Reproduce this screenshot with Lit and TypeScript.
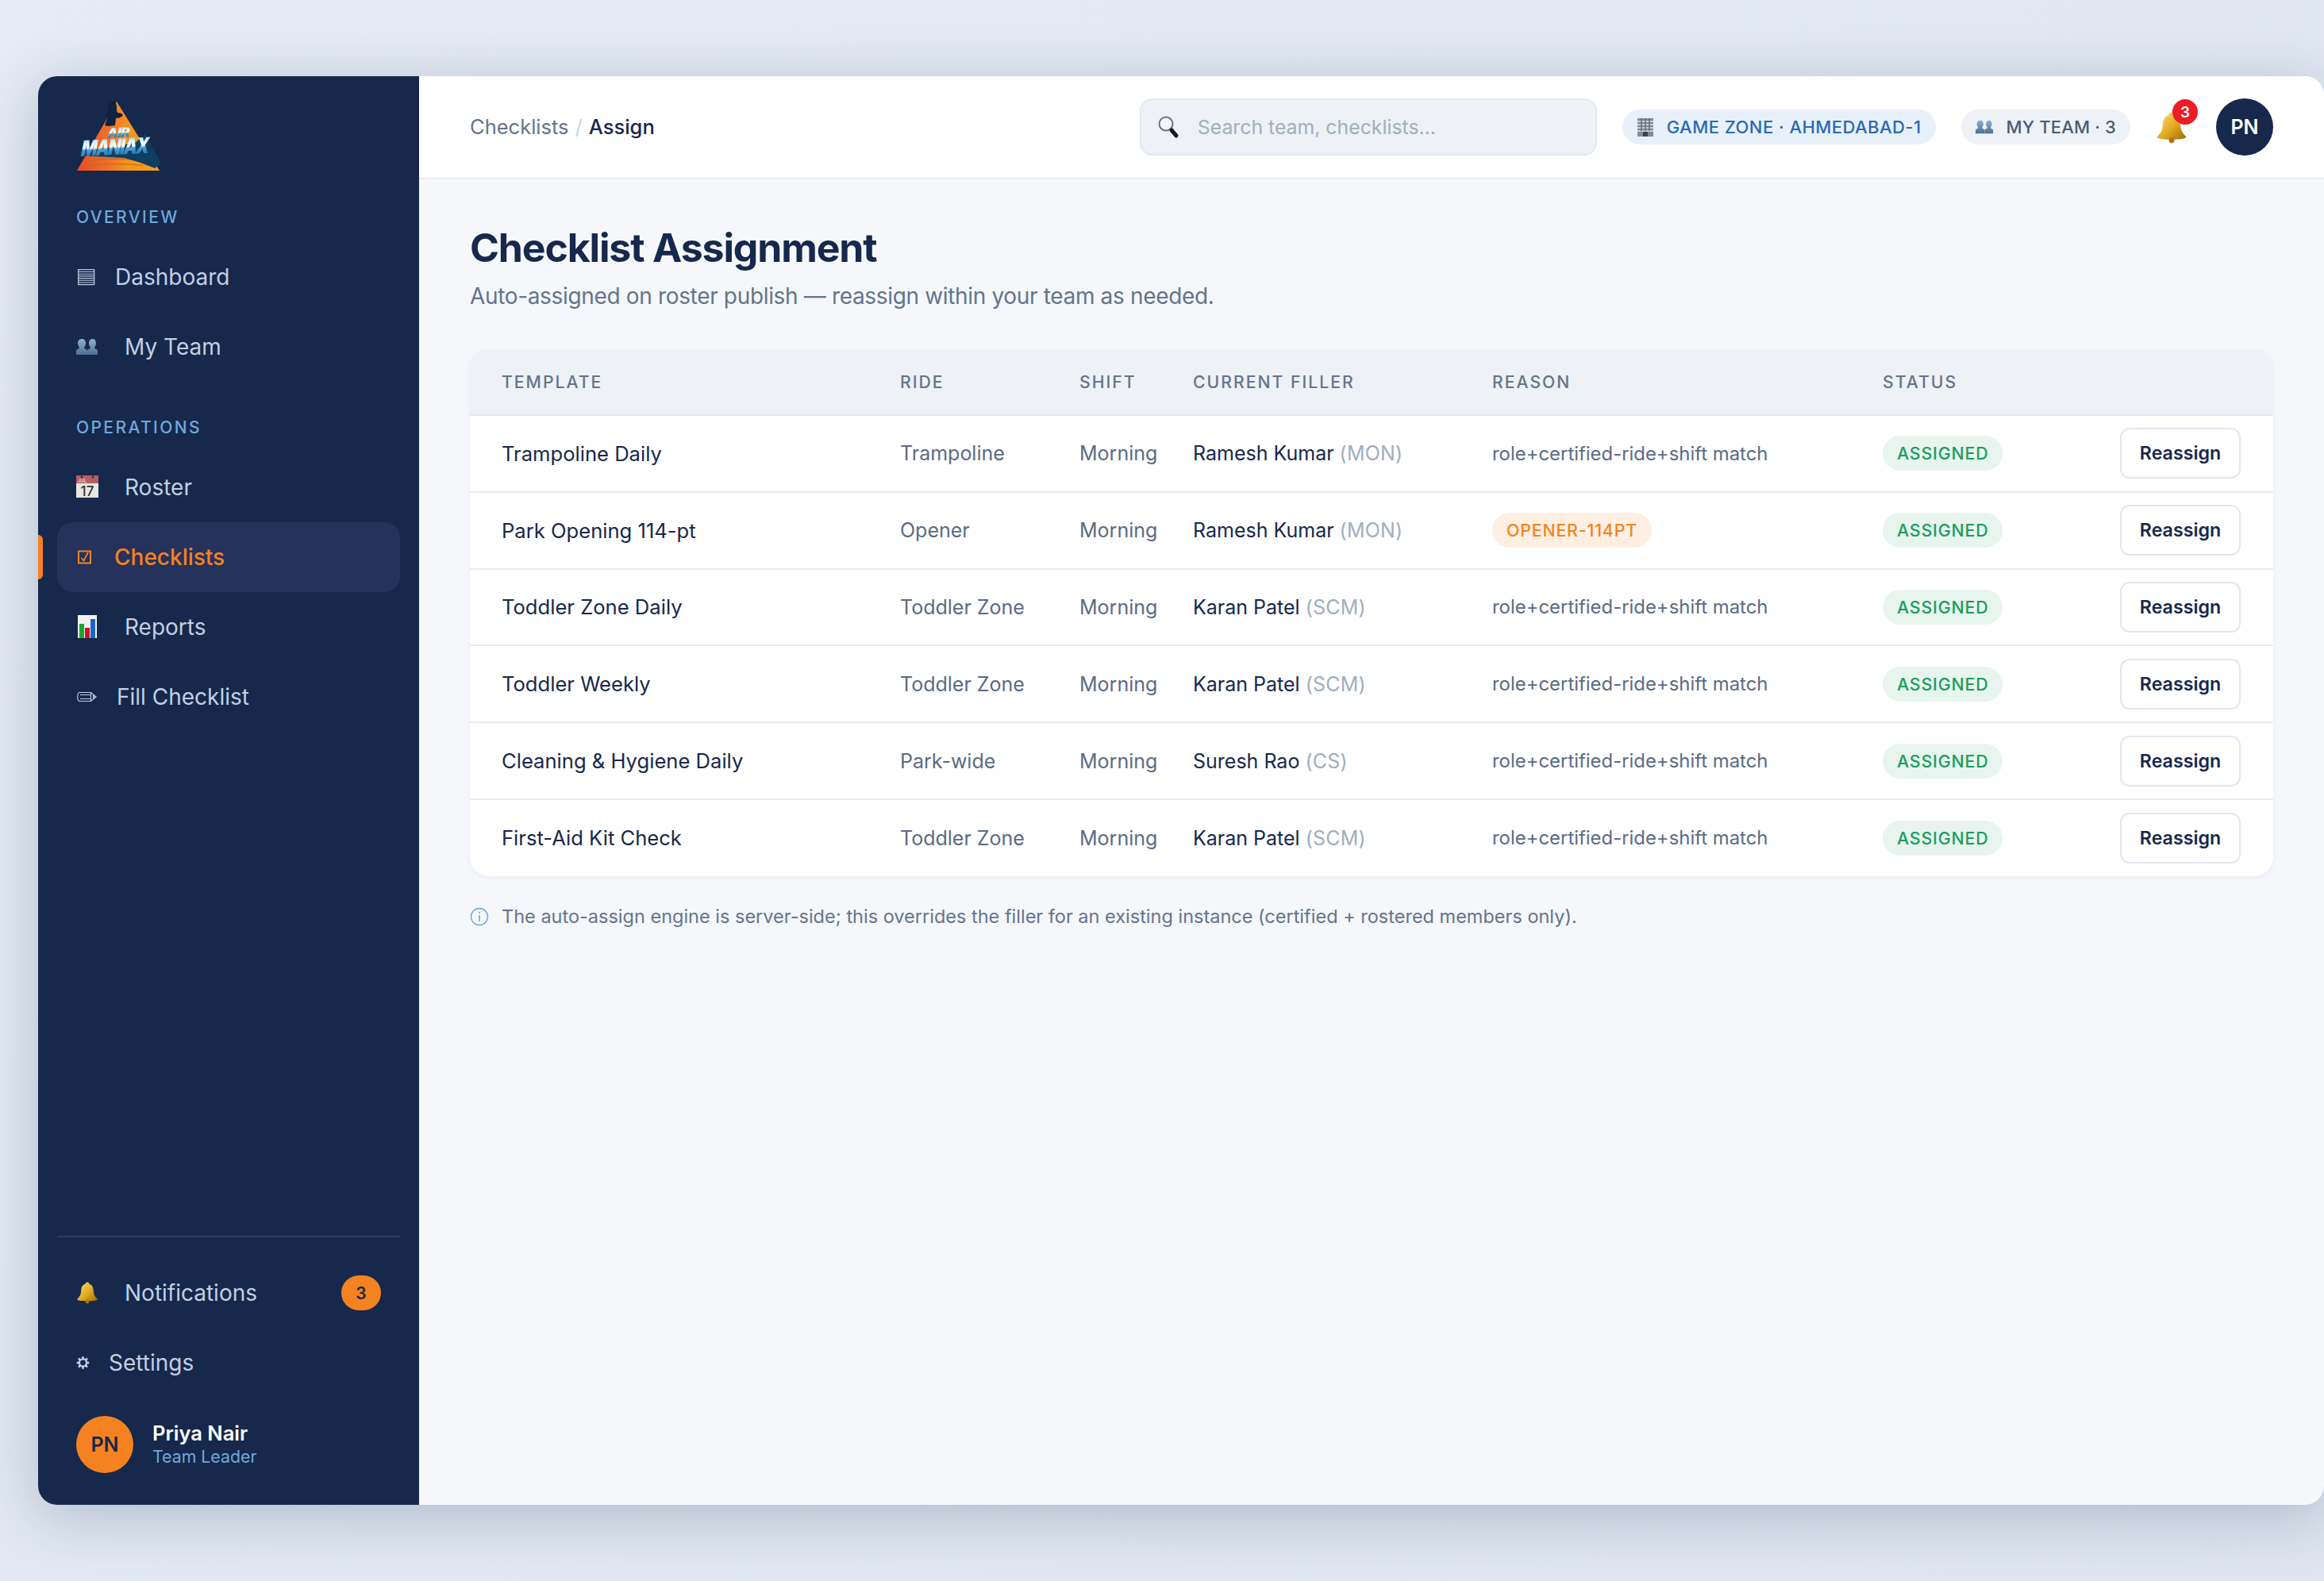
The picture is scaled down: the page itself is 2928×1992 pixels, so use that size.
import { LitElement, html, css, svg } from "lit";
import { customElement } from "lit/decorators.js";

const defs = svg`
  <defs>
    <linearGradient id="gold" x1="0" y1="0" x2="1" y2="1"><stop offset="0" stop-color="#ffe27a"/><stop offset=".55" stop-color="#e0a91f"/><stop offset="1" stop-color="#9a6a0c"/></linearGradient>
    <linearGradient id="bust" x1="0" y1="0" x2="0" y2="1"><stop offset="0" stop-color="#8fb0cf"/><stop offset="1" stop-color="#4c7094"/></linearGradient>
    <linearGradient id="tri" x1="0" y1="0" x2="1" y2="0"><stop offset="0" stop-color="#ea4a28"/><stop offset=".42" stop-color="#f4742a"/><stop offset=".6" stop-color="#f7921e"/><stop offset="1" stop-color="#f9a01f"/></linearGradient>
    <linearGradient id="mx" x1="0" y1="0" x2="0" y2="1"><stop offset="0" stop-color="#5fb0de"/><stop offset=".3" stop-color="#d9f0fb"/><stop offset=".5" stop-color="#ffffff"/><stop offset=".58" stop-color="#4aa2d6"/><stop offset="1" stop-color="#14608f"/></linearGradient>
  </defs>`;

const bell = (w: number, h: number, bw: number) => html`<svg class="ico" width=${w} height=${h} viewBox="0 0 ${(28 * w) / bw} ${(28 * h) / bw}" preserveAspectRatio="xMinYMid meet">
  <path fill="url(#gold)" d="M14 .5c-1.600 0-2.400 1-2.400 2.300C7.800 4 6.400 7 6.200 11.200c-.2 4.800-1.600 7.400-4.600 10.200-.7.7-.3 1.500.8 1.800 3 .8 7.200 1.200 11.600 1.200s8.600-.4 11.600-1.200c1.100-.3 1.500-1.100.8-1.800-3-2.800-4.400-5.400-4.600-10.200C21.600 7 20.200 4 16.400 2.800 16.400 1.500 15.600.5 14 .5z"/>
  <circle cx="14" cy="25" r="2.400" fill="#a8760f"/>
</svg>`;

const busts = (w: number, h: number, bw: number) => html`<svg class="ico" width=${w} height=${h} viewBox="0 0 ${(28 * w) / bw} ${(28 * h) / bw}" preserveAspectRatio="xMinYMid meet">
  <g fill="url(#bust)">
    <path d="M7.500 1C10.300 1 12 3.400 12 6.500c0 2.200-.8 4-2 5.200.2 1.200 1 1.800 2.300 2.400 1.100.5 1.700 1.300 1.700 2.600V21H0v-4.300c0-1.300.6-2.100 1.700-2.600C3 13.500 3.800 12.900 4 11.700 2.800 10.500 2 8.700 2 6.500 2 3.400 3.700 1 7.500 1z"/>
    <path d="M20.500 1C23.300 1 25 3.400 25 6.500c0 2.200-.8 4-2 5.200.2 1.200 1 1.800 2.300 2.400 1.100.5 1.700 1.300 1.700 2.600V21H14v-4.300c0-1.300.6-2.100 1.700-2.600 1.300-.6 2.100-1.200 2.300-2.400-1.200-1.200-2-3-2-5.200C16 3.400 17.700 1 20.500 1z"/>
  </g>
</svg>`;

const icons: Record<string, unknown> = {
  dash: html`<svg class="ico" width="25" height="24" viewBox="0 0 25 24">
    <path fill="none" stroke="#b9c6dc" stroke-width="1.300" d="M2.700 2.700h20v19h-20z"/>
    <path stroke="#b9c6dc" stroke-width="1.100" d="M2.700 5.500h20M2.700 8.200h20M2.700 10.900h20M2.700 13.600h20M2.700 16.300h20M2.700 19h20"/>
  </svg>`,
  team: busts(37, 22, 28),
  cal: html`<svg class="ico" width="37" height="30" viewBox="0 0 37 30">
    <rect x="0" y="0" width="28" height="28" fill="#e8e6e3"/>
    <rect x="0" y="0" width="28" height="10" fill="#b4605f"/>
    <circle cx="7" cy="2" r="1.400" fill="#1c2b4a"/><circle cx="21" cy="2" r="1.400" fill="#1c2b4a"/>
    <text x="7.500" y="9" text-anchor="middle" class="jul">JUL</text>
    <text x="14" y="25.500" text-anchor="middle" class="cal">17</text>
  </svg>`,
  check: html`<svg class="ico" width="24" height="20" viewBox="0 0 24 20">
    <path fill="none" stroke="#f58220" stroke-width="2" d="M3 2.500h15v15H3z"/>
    <path fill="none" stroke="#f58220" stroke-width="1.800" d="M6.500 11l3 3.500L15 4"/>
  </svg>`,
  chart: html`<svg class="ico" width="37" height="30" viewBox="0 0 37 30">
    <rect x="2" y="0" width="24" height="29" fill="#f1f2f4"/>
    <rect x="4" y="11" width="6" height="18" fill="#18a82a"/>
    <rect x="11" y="16" width="6" height="13" fill="#c8141c"/>
    <rect x="18" y="5" width="6" height="24" fill="#1f63c4"/>
  </svg>`,
  pencil: html`<svg class="ico" width="27" height="18" viewBox="0 0 27 18">
    <path fill="none" stroke="#c3cfe3" stroke-width="1.100" d="M4 3.500h14.500l6.500 5.500-6.500 5.500H4c-3-.2-3-10.800 0-11zM5 6.500h13.500M5 11.500h13.500M18.500 3.500v11M25 9l-3.500-1.500v3z"/>
  </svg>`,
  bell: bell(37, 28, 28),
  gear: html`<svg class="ico" width="17" height="20" viewBox="0 0 24 24">
    <circle cx="12" cy="12" r="6.500" fill="none" stroke="#c6d1e3" stroke-width="3.400"/>
    <path stroke="#c6d1e3" stroke-width="3.600" d="M12 1v4M12 19v4M1 12h4M19 12h4M4.200 4.200l2.800 2.800M17 17l2.800 2.800M19.800 4.200L17 7M7 17l-2.800 2.800"/>
  </svg>`,
};

interface Row { t: string; ride: string; name: string; code: string; reason?: string }
const rows: Row[] = [
  { t: "Trampoline Daily", ride: "Trampoline", name: "Ramesh Kumar", code: "(MON)" },
  { t: "Park Opening 114-pt", ride: "Opener", name: "Ramesh Kumar", code: "(MON)", reason: "OPENER-114PT" },
  { t: "Toddler Zone Daily", ride: "Toddler Zone", name: "Karan Patel", code: "(SCM)" },
  { t: "Toddler Weekly", ride: "Toddler Zone", name: "Karan Patel", code: "(SCM)" },
  { t: "Cleaning & Hygiene Daily", ride: "Park-wide", name: "Suresh Rao", code: "(CS)" },
  { t: "First-Aid Kit Check", ride: "Toddler Zone", name: "Karan Patel", code: "(SCM)" },
];

@customElement("app-root")
export class AppRoot extends LitElement {
  static styles = css`
    :host {
      display: block;
      width: 2928px;
      height: 1992px;
      box-sizing: border-box;
      padding: 96px 0 96px 48px;
      overflow: hidden;
      background: linear-gradient(135deg, #e5ebf4, #dee5ef);
      font-family: Inter, "Noto Sans", sans-serif;
      color: #16284c;
    }
    * { box-sizing: border-box; }
    .sprites { position: absolute; width: 0; height: 0; }
    .card {
      display: flex;
      height: 1800px;
      border-radius: 24px;
      overflow: hidden;
      box-shadow: 0 14px 72px rgba(22, 40, 76, 0.24);
      background: #f5f7fb;
    }
    .side {
      width: 480px;
      flex: none;
      background: #16284c;
      display: flex;
      flex-direction: column;
      position: relative;
      padding: 32px 24px 40px;
      color: #c3cfe3;
    }
    .logo { display: block; margin-left: 24px; }
    .cap {
      margin: 44px 0 0 24px;
      font-size: 21px;
      line-height: 28px;
      font-weight: 500;
      letter-spacing: 2.4px;
      color: #6fa8dc;
    }
    .nav { display: flex; flex-direction: column; margin-top: 17px; }
    .item {
      height: 88px;
      display: flex;
      align-items: center;
      gap: 24px;
      padding: 0 24px;
      border-radius: 20px;
      font-size: 28px;
    }
    .item.active {
      background: #24325c;
      color: #f58220;
      font-weight: 500;
    }
    .bar {
      position: absolute;
      left: 0;
      top: 578px;
      width: 6px;
      height: 56px;
      background: #f58220;
      border-radius: 0 6px 6px 0;
    }
    .ico { flex: none; display: block; }
    .cal { font: 500 17px Inter, sans-serif; fill: #333; }
    .jul { font: 600 6px Inter, sans-serif; fill: #e8d3d0; }
    .push { margin-top: auto; }
    .foot { border-top: 2px solid #2d3d63; padding-top: 26px; display: flex; flex-direction: column; }
    .count {
      margin-left: auto;
      margin-right: 0;
      width: 50px;
      height: 44px;
      border-radius: 22px;
      background: #f58220;
      color: #16284c;
      font-size: 21px;
      font-weight: 600;
      display: flex;
      align-items: center;
      justify-content: center;
    }
    .user { display: flex; align-items: center; gap: 24px; margin: 23px 0 0 24px; }
    .av {
      flex: none;
      width: 72px;
      height: 72px;
      border-radius: 50%;
      display: flex;
      align-items: center;
      justify-content: center;
      font-size: 25px;
      font-weight: 600;
    }
    .av.o { background: #f58220; color: #16284c; }
    .av.n { background: #16284c; color: #fff; margin-left: 36px; }
    .who { margin-top: -2px; }
    .uname { font-size: 25.500px; line-height: 33px; font-weight: 600; color: #fff; }
    .urole { font-size: 21.300px; line-height: 27px; color: #6fa8dc; }

    .main { flex: 1; min-width: 0; display: flex; flex-direction: column; }
    .top {
      height: 130px;
      flex: none;
      background: #fff;
      border-bottom: 2px solid #e9edf3;
      display: flex;
      align-items: center;
      padding: 0 64px;
    }
    .crumb { font-size: 25.500px; color: #64748b; display: flex; gap: 8px; margin-top: -2px; }
    .crumb i { font-style: normal; color: #cbd5e1; }
    .crumb b { font-weight: 500; color: #16284c; }
    .search {
      margin-left: auto;
      width: 576px;
      height: 72px;
      border: 2px solid #e2e8f0;
      border-radius: 16px;
      background: #eef1f6;
      display: flex;
      align-items: center;
      gap: 23px;
      padding: 0 20px;
      font-size: 24.800px;
      color: #a0aec0;
    }
    .pill {
      height: 44px;
      border-radius: 22px;
      display: flex;
      align-items: center;
      gap: 16px;
      padding: 0 18px;
      font-size: 22px;
      font-weight: 500;
      letter-spacing: 0.45px;
      white-space: nowrap;
    }
    .pill.zone { margin-left: 32px; background: #e8f1fa; color: #2a6ab5; }
    .pill.team { margin-left: 32px; background: #eef1f6; color: #4a5b78; letter-spacing: 0.15px; }
    .bellb { position: relative; margin-left: 32px; width: 40px; height: 40px; margin-top: 2px; }
    .dot {
      position: absolute;
      left: 21px;
      top: -16px;
      width: 32px;
      height: 32px;
      border-radius: 50%;
      background: #ee1c25;
      color: #fff;
      font-size: 19px;
      font-weight: 600;
      display: flex;
      align-items: center;
      justify-content: center;
    }

    .body { padding: 56px 64px 0; }
    h1 { margin: 0; font-size: 50px; line-height: 60px; font-weight: 700; color: #16284c; letter-spacing: -1.150px; }
    .sub { margin: 11px 0 0; font-size: 28px; line-height: 40px; color: #64748b; letter-spacing: -0.340px; }
    .tbl {
      margin-top: 47px;
      background: #fff;
      border-radius: 24px;
      overflow: hidden;
      box-shadow: 0 2px 6px rgba(22, 40, 76, 0.05);
    }
    table { width: 100%; border-collapse: collapse; table-layout: fixed; }
    th {
      height: 83px;
      background: #eef1f6;
      border-bottom: 2px solid #e2e8f0;
      padding: 0 0 0 40px;
      text-align: left;
      font-size: 21.200px;
      font-weight: 500;
      letter-spacing: 2px;
      color: #64748b;
    }
    td {
      height: 96.800px;
      padding: 0 0 0 40px;
      border-bottom: 2px solid #e8ecf2;
      font-size: 25px;
      color: #5a6b85;
      white-space: nowrap;
    }
    tr:last-child td { border-bottom: 0; }
    td.tpl { color: #16284c; font-weight: 430; font-size: 25.600px; }
    td .nm { color: #16284c; font-weight: 420; }
    td .cd { color: #a0aec0; letter-spacing: 0.2px; }
    td.why { font-size: 23.900px; }
    .tag {
      display: inline-flex;
      align-items: center;
      height: 44px;
      padding: 0 18px;
      border-radius: 22px;
      font-size: 21.400px;
      font-weight: 500;
      letter-spacing: 0.8px;
    }
    .tag.g { background: #e8f5ee; color: #1a9e5c; }
    .tag.o { background: #feefe2; color: #f58220; }
    .btn {
      width: 152px;
      height: 64px;
      border: 2px solid #e2e8f0;
      border-radius: 12px;
      background: #fff;
      color: #16284c;
      font: 600 23.200px Inter, sans-serif;
      padding: 0;
      display: block;
    }
    .note {
      margin: 36px 0 0;
      display: flex;
      align-items: center;
      gap: 16px;
      font-size: 23.500px;
      line-height: 30px;
      color: #64748b;
    }
  `;

  render() {
    return html`
      <svg class="sprites" aria-hidden="true">${defs}</svg>
      <div class="card">
        <aside class="side">
          <span class="bar"></span>
          <svg class="logo" width="108" height="88" viewBox="0 0 108 88">
            <path fill="url(#tri)" d="M51 0l54 87H1z"/>
            <path fill="#0d2340" d="M43 1c5-2 8 1 8 6 0 3 0 5 1 7 3 0 6 1 7 3-2 3-6 4-9 4l-1 9-9 1-4-1 3-9c-2-3-1-7 1-10 0-4 1-8 3-10z"/>
            <path fill="#b8701a" opacity=".75" d="M14 74c24-4 50-4 70 0v1.500C64 72 38 72 14 75.500zM8 80c26-3 54-3 76 0v1.300C64 78.500 36 78.500 8 81.300z"/>
            <path fill="#0f3e63" d="M87 41l20 37-8 6-18-7-20-6-55-3-2-4 70-12z"/>
            <text transform="translate(38 46) rotate(-3) skewX(-14)" font-family="Inter, sans-serif" font-weight="900" font-size="17" fill="url(#mx)" letter-spacing="-.6">AIR</text>
            <text transform="translate(5 69) rotate(-3) skewX(-14) scale(1 1.300)" font-family="Inter, sans-serif" font-weight="900" font-size="21" fill="url(#mx)" letter-spacing="-1.300">MANIAX</text>
          </svg>
          <div class="cap">OVERVIEW</div>
          <nav class="nav">
            <div class="item">${icons.dash}Dashboard</div>
            <div class="item">${icons.team}My Team</div>
          </nav>
          <div class="cap">OPERATIONS</div>
          <nav class="nav">
            <div class="item">${icons.cal}Roster</div>
            <div class="item active">${icons.check}Checklists</div>
            <div class="item">${icons.chart}Reports</div>
            <div class="item">${icons.pencil}Fill Checklist</div>
          </nav>
          <div class="foot push">
            <div class="item">${icons.bell}Notifications<span class="count">3</span></div>
            <div class="item">${icons.gear}Settings</div>
          </div>
          <div class="user">
            <div class="av o">PN</div>
            <div class="who"><div class="uname">Priya Nair</div><div class="urole">Team Leader</div></div>
          </div>
        </aside>
        <div class="main">
          <header class="top">
            <div class="crumb"><span>Checklists</span><i>/</i><b>Assign</b></div>
            <div class="search">
              <svg class="ico" width="28" height="30" viewBox="0 0 28 30">
                <circle cx="11" cy="11" r="8.500" fill="#f2f5f8" stroke="#6d7480" stroke-width="2"/>
                <path stroke="#1b1b1b" stroke-width="5" stroke-linecap="round" d="M18 19l6 7"/>
              </svg>
              Search team, checklists…
            </div>
            <div class="pill zone">
              <svg class="ico" width="22" height="24" viewBox="0 0 22 24">
                <rect x="1" y="1" width="20" height="23" fill="#7f8c99"/>
                <path stroke="#dfe5ea" stroke-width="1.500" d="M1 5h20M1 9h20M1 13h20M1 17h20"/>
                <path stroke="#5e6a76" stroke-width="1.500" d="M6 1v16M11 1v16M16 1v16"/>
                <rect x="8" y="18" width="6" height="6" fill="#3a4552"/>
              </svg>
              GAME ZONE · AHMEDABAD-1
            </div>
            <div class="pill team">${busts(23, 19, 23)}MY TEAM · 3</div>
            <div class="bellb">${bell(40, 40, 40)}<span class="dot">3</span></div>
            <div class="av n">PN</div>
          </header>
          <div class="body">
            <h1>Checklist Assignment</h1>
            <p class="sub">Auto-assigned on roster publish — reassign within your team as needed.</p>
            <div class="tbl">
              <table>
                <colgroup>
                  <col width="502" /><col width="226" /><col width="143" /><col width="377" /><col width="492" /><col width="299" /><col />
                </colgroup>
                <thead>
                  <tr><th>TEMPLATE</th><th>RIDE</th><th>SHIFT</th><th>CURRENT FILLER</th><th>REASON</th><th>STATUS</th><th></th></tr>
                </thead>
                <tbody>
                  ${rows.map(
                    (r) => html`<tr>
                      <td class="tpl">${r.t}</td>
                      <td>${r.ride}</td>
                      <td>Morning</td>
                      <td><span class="nm">${r.name}</span> <span class="cd">${r.code}</span></td>
                      <td class="why">${r.reason ? html`<span class="tag o">${r.reason}</span>` : "role+certified-ride+shift match"}</td>
                      <td><span class="tag g">ASSIGNED</span></td>
                      <td><button class="btn">Reassign</button></td>
                    </tr>`
                  )}
                </tbody>
              </table>
            </div>
            <p class="note">
              <svg class="ico" width="24" height="28" viewBox="0 0 24 28">
                <circle cx="12" cy="14" r="10.500" fill="none" stroke="#6fa8dc" stroke-width="1.400"/>
                <path stroke="#6fa8dc" stroke-width="1.600" d="M12 12v8M12 8v2"/>
              </svg>
              The auto-assign engine is server-side; this overrides the filler for an existing instance (certified + rostered members only).
            </p>
          </div>
        </div>
      </div>
    `;
  }
}
